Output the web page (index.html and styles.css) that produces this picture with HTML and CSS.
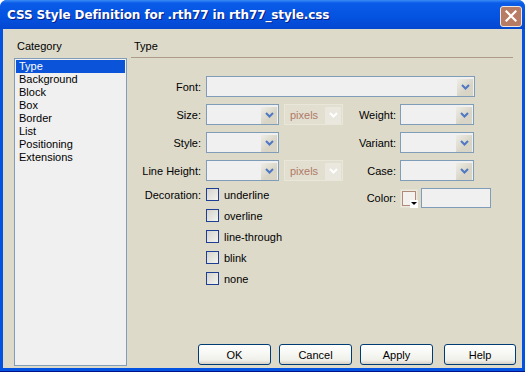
FILE: index.html
```html
<!DOCTYPE html>
<html lang="en">
<head>
    <meta charset="UTF-8">
    <title>CSS Style Definition</title>
    <link rel="stylesheet" href="styles.css">
</head>
<body>

<div class="window">
    <div class="titlebar">
        <span class="title">CSS Style Definition for .rth77 in rth77_style.css</span>
        <button class="close" title="Close">
            <svg width="12" height="12" viewBox="0 0 12 12"><path d="M1.5 1.5 L10.5 10.5 M10.5 1.5 L1.5 10.5" stroke="#fff" stroke-width="2.2" stroke-linecap="square"/></svg>
        </button>
    </div>

    <div class="dialog">
        <div class="category">
            <div class="col-head">Category</div>
            <ul class="list">
                <li class="selected">Type</li>
                <li>Background</li>
                <li>Block</li>
                <li>Box</li>
                <li>Border</li>
                <li>List</li>
                <li>Positioning</li>
                <li>Extensions</li>
            </ul>
        </div>

        <div class="panel">
            <div class="panel-head">Type</div>

            <div class="form">
                <div class="row">
                    <label class="lbl">Font:</label>
                    <div class="select wide"><span class="drop"><svg width="9" height="6" viewBox="0 0 9 6"><path d="M1 1 L4.5 4.5 L8 1" fill="none" stroke="#4f78c4" stroke-width="2"/></svg></span></div>
                </div>
                <div class="row">
                    <label class="lbl">Size:</label>
                    <div class="select"><span class="drop"><svg width="9" height="6" viewBox="0 0 9 6"><path d="M1 1 L4.5 4.5 L8 1" fill="none" stroke="#4f78c4" stroke-width="2"/></svg></span></div>
                    <div class="select unit off">pixels<span class="drop"><svg width="9" height="6" viewBox="0 0 9 6"><path d="M1 1 L4.5 4.5 L8 1" fill="none" stroke="#fff" stroke-width="2"/></svg></span></div>
                    <label class="lbl right">Weight:</label>
                    <div class="select"><span class="drop"><svg width="9" height="6" viewBox="0 0 9 6"><path d="M1 1 L4.5 4.5 L8 1" fill="none" stroke="#4f78c4" stroke-width="2"/></svg></span></div>
                </div>
                <div class="row">
                    <label class="lbl">Style:</label>
                    <div class="select"><span class="drop"><svg width="9" height="6" viewBox="0 0 9 6"><path d="M1 1 L4.5 4.5 L8 1" fill="none" stroke="#4f78c4" stroke-width="2"/></svg></span></div>
                    <div class="unit-space"></div>
                    <label class="lbl right">Variant:</label>
                    <div class="select"><span class="drop"><svg width="9" height="6" viewBox="0 0 9 6"><path d="M1 1 L4.5 4.5 L8 1" fill="none" stroke="#4f78c4" stroke-width="2"/></svg></span></div>
                </div>
                <div class="row">
                    <label class="lbl">Line Height:</label>
                    <div class="select"><span class="drop"><svg width="9" height="6" viewBox="0 0 9 6"><path d="M1 1 L4.5 4.5 L8 1" fill="none" stroke="#4f78c4" stroke-width="2"/></svg></span></div>
                    <div class="select unit off">pixels<span class="drop"><svg width="9" height="6" viewBox="0 0 9 6"><path d="M1 1 L4.5 4.5 L8 1" fill="none" stroke="#fff" stroke-width="2"/></svg></span></div>
                    <label class="lbl right">Case:</label>
                    <div class="select"><span class="drop"><svg width="9" height="6" viewBox="0 0 9 6"><path d="M1 1 L4.5 4.5 L8 1" fill="none" stroke="#4f78c4" stroke-width="2"/></svg></span></div>
                </div>
                <div class="row deco">
                    <label class="lbl">Decoration:</label>
                    <div class="checks">
                        <div class="check"><span class="box"></span>underline</div>
                        <div class="check"><span class="box"></span>overline</div>
                        <div class="check"><span class="box"></span>line-through</div>
                        <div class="check"><span class="box"></span>blink</div>
                        <div class="check"><span class="box"></span>none</div>
                    </div>
                    <label class="lbl right">Color:</label>
                    <div class="swatch">
                        <svg width="18" height="19" viewBox="0 0 18 19">
                            <rect x="2.5" y="2.5" width="13" height="14" fill="#f3f2ee" stroke="#b08a78"/>
                            <rect x="10" y="11" width="8" height="8" fill="#fff"/>
                            <path d="M11 13 H17 L14 16 Z" fill="#000"/>
                        </svg>
                    </div>
                    <div class="text-input"></div>
                </div>
            </div>

            <div class="buttons">
                <button class="btn">OK</button>
                <button class="btn">Cancel</button>
                <button class="btn">Apply</button>
                <button class="btn help">Help</button>
            </div>
        </div>
    </div>
</div>

</body>
</html>
```

FILE: styles.css
```css
body {
    margin: 0;
    font-family: "Liberation Sans", Arial, sans-serif;
    font-size: 11px;
    color: #000;
    background: #fff;
}
.window {
    width: 525px;
    height: 372px;
    display: flex;
    flex-direction: column;
    background: #0452e0;
    border-bottom: 1px solid #00138c;
    box-sizing: border-box;
    border-radius: 7px 7px 0 0;
}
.titlebar {
    height: 29px;
    display: flex;
    align-items: center;
    justify-content: space-between;
    padding: 0 3px 0 7px;
    background: linear-gradient(to bottom, #3b8cf5 0px, #0a5ce8 3px, #0452e0 60%, #0447d0 100%);
    border-radius: 7px 7px 0 0;
}
.title {
    color: #fff;
    font-family: "DejaVu Sans", sans-serif;
    font-weight: bold;
    font-size: 12px;
    letter-spacing: -0.1px;
    text-shadow: 1px 1px 0 #0a1e85;
    padding-top: 1px;
}
.close {
    width: 22px;
    height: 21px;
    margin-top: 3px;
    padding: 0;
    border: 1px solid #f2e6e0;
    border-radius: 3px;
    background: #b87b64;
    display: flex;
    align-items: center;
    justify-content: center;
}
.dialog {
    flex: 1;
    display: flex;
    gap: 4px;
    margin: 0 3px 3px 3px;
    padding: 11px 6px 2px 11px;
    background: #dddaca;
}
.category {
    width: 113px;
    display: flex;
    flex-direction: column;
}
.col-head {
    height: 18px;
    line-height: 13px;
    padding-left: 3px;
}
.list {
    flex: 1;
    list-style: none;
    margin: 0;
    padding: 1px;
    background: #f0f0f0;
    border: 1px solid #7f9db9;
}
.list li {
    height: 13px;
    line-height: 13px;
    padding-left: 3px;
}
.list li.selected {
    background: #0b54d9;
    color: #fff;
}
.panel {
    flex: 1;
    display: flex;
    flex-direction: column;
}
.panel-head {
    height: 17px;
    line-height: 13px;
    padding-left: 3px;
    margin-right: 3px;
    border-bottom: 1px solid #ad9c8c;
}
.form {
    padding-top: 18px;
    display: flex;
    flex-direction: column;
    gap: 7px;
}
.row {
    display: flex;
    align-items: center;
    height: 21px;
}
.row.deco {
    align-items: flex-start;
    height: auto;
}
.lbl {
    width: 70px;
    text-align: right;
    margin-right: 5px;
}
.lbl.right {
    width: 53px;
    margin-right: 4px;
}
.deco .lbl {
    line-height: 13px;
    padding-top: 1px;
}
.deco .lbl.right {
    padding-top: 4px;
}
.select {
    width: 73px;
    height: 21px;
    box-sizing: border-box;
    border: 1px solid #7f9db9;
    background: #f0f0f0;
    display: flex;
    justify-content: flex-end;
    align-items: center;
    padding: 1px;
}
.row .select:last-child {
    width: 74px;
}
.select.wide {
    width: 269px !important;
}
.drop {
    width: 16px;
    height: 17px;
    background: linear-gradient(135deg, #eeede6, #d8d5c7 60%);
    display: flex;
    align-items: center;
    justify-content: center;
    margin-top: 1px;
}
.select.unit {
    width: 59px;
    margin-left: 5px;
    justify-content: space-between;
    padding-left: 5px;
    color: #b07a66;
    font-size: 11px;
}
.select.off {
    border-color: #e9e6da;
    background: #e2dfd1;
}
.select.off .drop {
    background: #e9e7de;
}
.unit-space {
    width: 64px;
}
.checks {
    width: 137px;
    display: flex;
    flex-direction: column;
    gap: 8px;
}
.check {
    display: flex;
    align-items: center;
    height: 13px;
}
.box {
    width: 13px;
    height: 13px;
    box-sizing: border-box;
    border: 1px solid #1c3f94;
    background: linear-gradient(135deg, #d4d3cb, #f4f4f0);
    margin-right: 5px;
}
.swatch {
    width: 18px;
    height: 19px;
    margin-top: 1px;
    background: #ece9df;
    box-shadow: inset 0 0 0 1px #e3e0d4;
}
.swatch svg {
    display: block;
}
.text-input {
    width: 70px;
    height: 20px;
    margin-left: 3px;
    box-sizing: border-box;
    border: 1px solid #7f9db9;
    background: #f0f0f0;
}
.buttons {
    margin-top: auto;
    margin-bottom: 1px;
    display: flex;
    justify-content: flex-end;
    gap: 8px;
}
.btn {
    width: 73px;
    height: 21px;
    padding: 0;
    border: 1px solid #003c74;
    border-radius: 3px;
    background: linear-gradient(to bottom, #ffffff, #f0f0ea 80%, #d6d0c5);
    font-family: "Liberation Sans", Arial, sans-serif;
    font-size: 11px;
    color: #000;
}
.btn.help {
    width: 72px;
    margin-left: 3px;
}
```
